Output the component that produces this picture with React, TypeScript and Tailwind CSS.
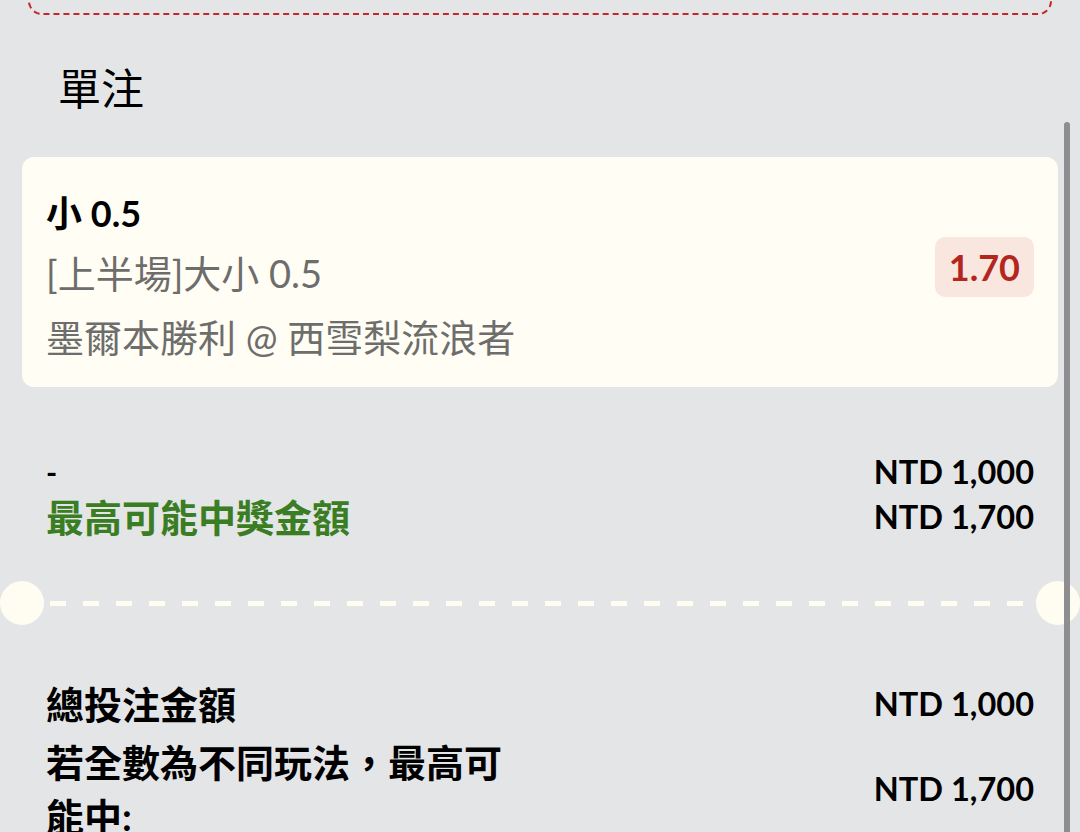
import * as React from "react";

const FONT = "font-['Lato','Noto_Sans_CJK_TC',sans-serif]";

function Money({ value }: { value: string }) {
  return <span className="text-[32.5px] font-bold text-black leading-none">NTD {value}</span>;
}

export default function App() {
  return (
    <div className={`relative w-[1080px] h-[832px] overflow-hidden bg-[#e4e5e7] ${FONT}`}>
      {/* dashed box from the section above */}
      <div className="mx-[28px] -mt-[45px] h-[60px] rounded-[14px] border-2 border-dashed border-[#c4262b]" />

      <h2 className="mt-[53px] ml-[58px] text-[43px] leading-[42px] font-normal text-black">單注</h2>

      {/* bet card */}
      <div className="mx-[22px] mt-[47px] h-[230px] rounded-[12px] bg-[#fffdf4] px-6 pt-[32px] flex justify-between">
        <div className="flex flex-col">
          <div className="text-[36px] leading-[48px] font-bold text-black">小 0.5</div>
          <div className="mt-1 text-[38px] leading-[64px] text-[#6d6d6b]">[上半場]大小 0.5</div>
          <div className="text-[38px] leading-[64px] text-[#6d6d6b]">墨爾本勝利 @ 西雪梨流浪者</div>
        </div>
        <div className="mt-[48px] h-[60px] rounded-[10px] bg-[#f8e6df] px-[14px] flex items-center">
          <span className="text-[36px] font-bold text-[#b3261e] leading-none">1.70</span>
        </div>
      </div>

      {/* stake / potential win */}
      <div className="mt-[63px] px-[46px] flex justify-between">
        <div className="flex flex-col">
          <div className="h-[45px] text-[30px] leading-[45px] font-bold text-black">-</div>
          <div className="h-[45px] text-[38px] leading-[45px] font-bold text-[#3b7d23]">最高可能中獎金額</div>
        </div>
        <div className="flex flex-col items-end">
          <div className="h-[45px] flex items-center"><Money value="1,000" /></div>
          <div className="h-[45px] flex items-center"><Money value="1,700" /></div>
        </div>
      </div>

      {/* ticket tear line */}
      <div className="mt-[41px] flex items-center">
        <div className="w-11 h-11 rounded-full bg-[#fffdf2] shrink-0" />
        <div className="flex-1 mx-[6px] h-[5px] bg-[linear-gradient(90deg,#fffdf2_16px,transparent_16px)] bg-[length:33px_5px] bg-repeat-x" />
        <div className="w-11 h-11 rounded-full bg-[#fffdf2] shrink-0" />
      </div>

      {/* totals */}
      <div className="mt-[51px] px-[46px] flex flex-col gap-[3px]">
        <div className="flex justify-between items-center">
          <div className="text-[38px] leading-[56px] font-bold text-black">總投注金額</div>
          <Money value="1,000" />
        </div>
        <div className="flex justify-between items-center">
          <div className="w-[490px] text-[38px] leading-[54px] font-bold text-black">若全數為不同玩法，最高可能中:</div>
          <Money value="1,700" />
        </div>
      </div>

      {/* scrollbar */}
      <div className="absolute left-[1064px] top-[122px] w-[6px] h-[720px] rounded-t-full bg-[#8e8e90]" />
    </div>
  );
}
